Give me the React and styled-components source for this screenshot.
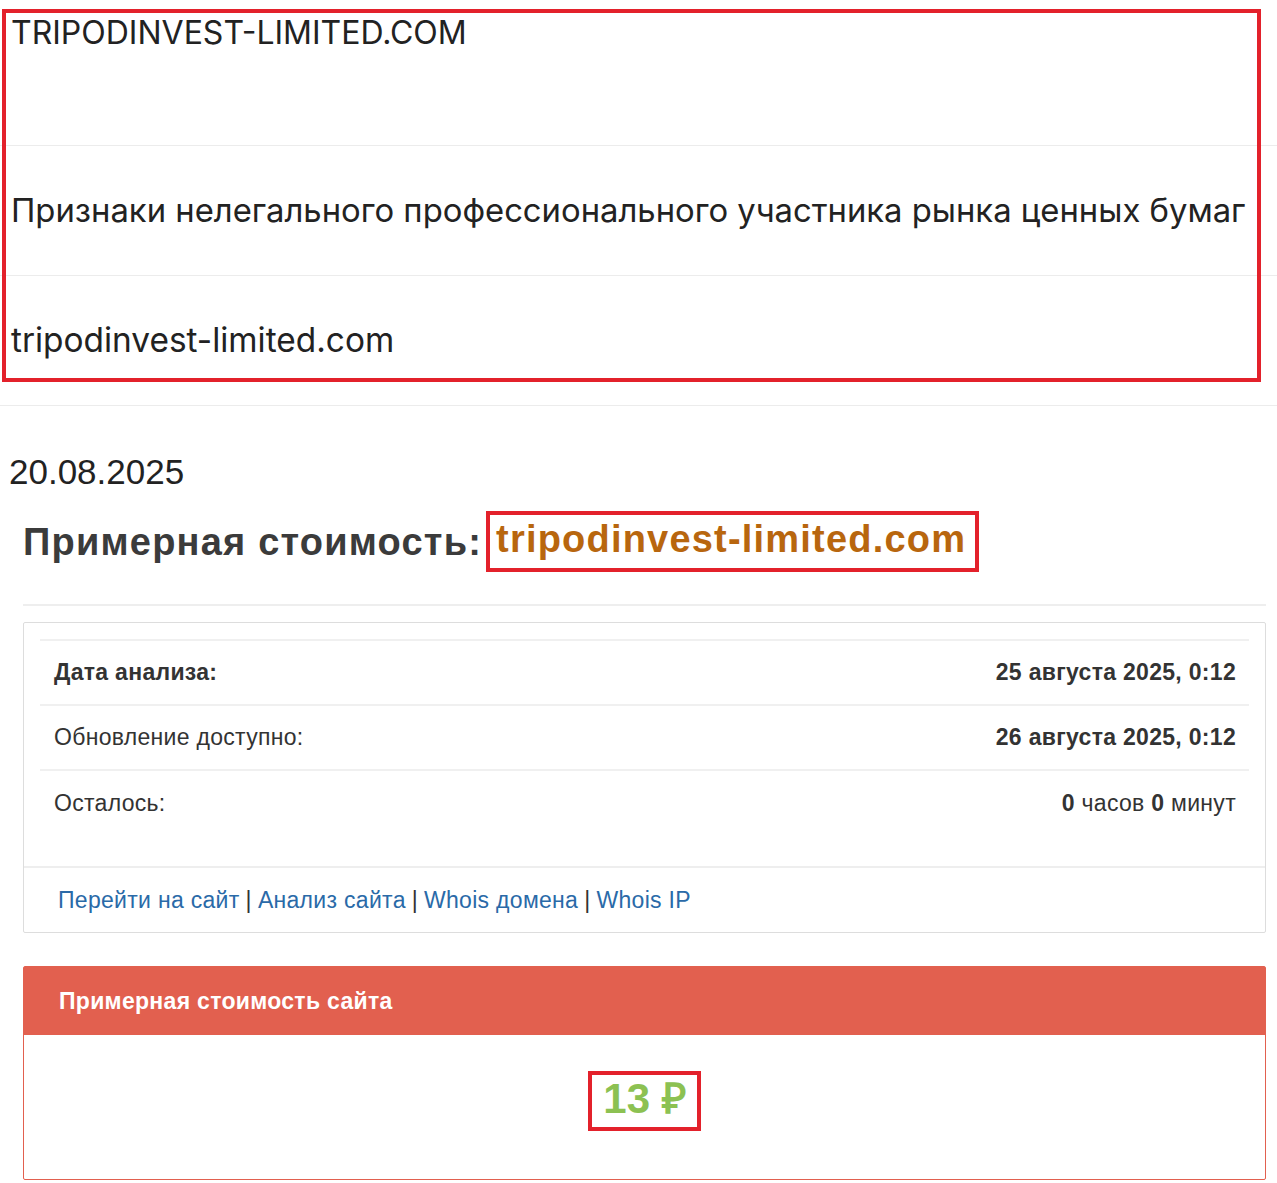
import React from 'react';
import styled, { createGlobalStyle } from 'styled-components';

const GlobalStyle = createGlobalStyle`
  *, *::before, *::after {
    box-sizing: border-box;
  }
  html, body {
    margin: 0;
    padding: 0;
  }
  body {
    font-family: 'Liberation Sans', Arial, sans-serif;
    background: #fff;
    color: #333;
  }
`;

const MARK = '#e3212b';

// шапка сайта
const SiteHeader = styled.header`
  position: relative;
  font-family: Inter, 'Noto Sans', sans-serif;
  color: #222;
`;

const HeaderRow = styled.div`
  height: ${(p) => (p.$first ? '146px' : '130px')};
  display: flex;
  align-items: ${(p) => (p.$first ? 'flex-start' : 'center')};
  padding: ${(p) => (p.$first ? '14px 0 0 11px' : '0 0 0 11px')};
  border-bottom: 1px solid #ececec;
  font-size: ${(p) => p.$size};
  line-height: 1.2;
`;

// красная рамка-пометка поверх блока
const MarkFrame = styled.div`
  position: absolute;
  top: 9px;
  left: 2px;
  width: 1259px;
  height: 373px;
  border: 4px solid ${MARK};
  pointer-events: none;
`;

const DateLine = styled.div`
  padding: 46px 0 0 9px;
  font-size: 35px;
  color: #222;
  line-height: 40px;
`;

const Content = styled.main`
  margin: 0 11px 0 23px;
`;

const Title = styled.h1`
  margin: 19px 0 0;
  display: flex;
  align-items: center;
  font-size: 38px;
  font-weight: 700;
  letter-spacing: 1.2px;
  color: #3b3b3b;
  line-height: 1;
`;

const Framed = styled.span`
  display: inline-block;
  margin-left: 4px;
  padding: 5px 9px 10px 6px;
  border: 4px solid ${MARK};
  color: #b8660e;
`;

const Rule = styled.hr`
  margin: 32px 0 16px;
  border: 0;
  border-top: 2px solid #eee;
`;

const InfoCard = styled.section`
  border: 1px solid #ddd;
  border-radius: 2px;
`;

const CardBody = styled.div`
  padding: 16px 16px 31px;
`;

const InfoTable = styled.table`
  width: 100%;
  border-collapse: collapse;
  font-size: 23px;
  letter-spacing: 0.3px;
  color: #333;
`;

const Cell = styled.td`
  height: 65px;
  padding: 0 13px 0 14px;
  border-top: 2px solid #f0f0f0;
  text-align: ${(p) => (p.$right ? 'right' : 'left')};
  font-weight: ${(p) => (p.$bold ? 700 : 400)};
  vertical-align: middle;
`;

const CardFooter = styled.div`
  height: 66px;
  display: flex;
  align-items: center;
  padding: 0 0 0 34px;
  border-top: 2px solid #eee;
  font-size: 23px;
  letter-spacing: 0.3px;
  color: #333;
`;

const FooterLink = styled.a`
  color: #2a6aa8;
  text-decoration: none;
`;

const Sep = styled.span`
  margin: 0 6px;
`;

const PricePanel = styled.section`
  margin-top: 33px;
  border: 1px solid #e2604f;
  border-radius: 2px;
`;

const PanelHeading = styled.div`
  height: 68px;
  display: flex;
  align-items: center;
  padding-left: 35px;
  background: #e2604f;
  color: #fff;
  font-size: 23px;
  letter-spacing: 0.3px;
  font-weight: 700;
`;

const PanelBody = styled.div`
  height: 144px;
  display: flex;
  align-items: flex-start;
  justify-content: center;
  padding-top: 36px;
`;

const Price = styled.span`
  display: inline-block;
  padding: 3px 11px 7px 11px;
  border: 4px solid ${MARK};
  font-size: 42px;
  font-weight: 700;
  color: #8cc152;
  line-height: 1;
`;

const rows = [
  { label: 'Дата анализа:', value: <b>25 августа 2025, 0:12</b>, bold: true },
  { label: 'Обновление доступно:', value: <b>26 августа 2025, 0:12</b> },
  {
    label: 'Осталось:',
    value: (
      <>
        <b>0</b> часов <b>0</b> минут
      </>
    ),
  },
];

const links = ['Перейти на сайт', 'Анализ сайта', 'Whois домена', 'Whois IP'];

export default function App() {
  return (
    <>
      <GlobalStyle />
      <SiteHeader>
        <HeaderRow $first $size="32px">TRIPODINVEST-LIMITED.COM</HeaderRow>
        <HeaderRow $size="32.8px">
          Признаки нелегального профессионального участника рынка ценных бумаг
        </HeaderRow>
        <HeaderRow $size="33.4px">tripodinvest-limited.com</HeaderRow>
        <MarkFrame />
      </SiteHeader>

      <DateLine>20.08.2025</DateLine>

      <Content>
        <Title>
          Примерная стоимость:<Framed>tripodinvest-limited.com</Framed>
        </Title>
        <Rule />

        <InfoCard>
          <CardBody>
            <InfoTable>
              <tbody>
                {rows.map((r) => (
                  <tr key={r.label}>
                    <Cell $bold={r.bold}>{r.label}</Cell>
                    <Cell $right>{r.value}</Cell>
                  </tr>
                ))}
              </tbody>
            </InfoTable>
          </CardBody>
          <CardFooter>
            {links.map((l, i) => (
              <React.Fragment key={l}>
                {i > 0 && <Sep>|</Sep>}
                <FooterLink href="#">{l}</FooterLink>
              </React.Fragment>
            ))}
          </CardFooter>
        </InfoCard>

        <PricePanel>
          <PanelHeading>Примерная стоимость сайта</PanelHeading>
          <PanelBody>
            <Price>13 ₽</Price>
          </PanelBody>
        </PricePanel>
      </Content>
    </>
  );
}
